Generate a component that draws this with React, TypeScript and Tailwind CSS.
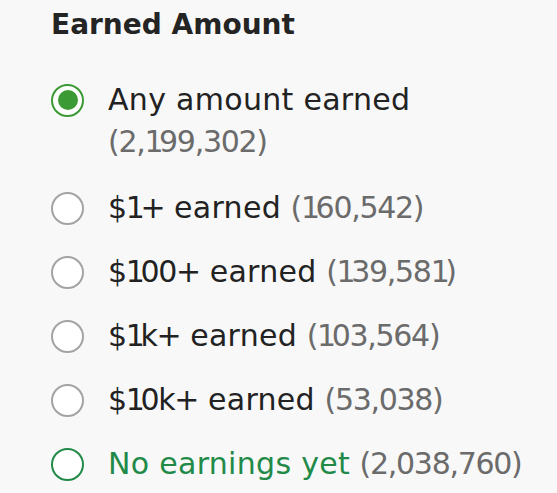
import React from "react";

type Item = { prefix: string; rest: string; count: string; selected?: boolean; green?: boolean; wrap?: boolean };

const items: Item[] = [
  { prefix: "", rest: "Any amount earned", count: "(2,199,302)", selected: true, wrap: true },
  { prefix: "$1+", rest: " earned", count: "(160,542)" },
  { prefix: "$100+", rest: " earned", count: "(139,581)" },
  { prefix: "$1k+", rest: " earned", count: "(103,564)" },
  { prefix: "$10k+", rest: " earned", count: "(53,038)" },
  { prefix: "", rest: "No earnings yet", count: "(2,038,760)", green: true },
];

function Num({ text }: { text: string }) {
  return (
    <>
      {text.split("").map((c, i) =>
        c === "1" ? (
          <span key={i} className="tracking-[-4.5px]">
            {c}
          </span>
        ) : (
          <span key={i} className="tracking-[-1.3px]">
            {c}
          </span>
        )
      )}
    </>
  );
}

function Radio({ selected, green }: { selected?: boolean; green?: boolean }) {
  if (selected) {
    return (
      <div className="w-[33px] h-[33px] rounded-full border-[2.5px] border-[#3c9a34] bg-white flex items-center justify-center shrink-0">
        <div className="w-[20px] h-[20px] rounded-full bg-[#3c9a34]" />
      </div>
    );
  }
  return (
    <div
      className={
        green
          ? "w-[33px] h-[33px] rounded-full border-[2.5px] border-[#228a48] bg-white shrink-0"
          : "w-[33px] h-[33px] rounded-full border-2 border-[#a3a3a3] bg-white shrink-0"
      }
    />
  );
}

export default function App() {
  return (
    <div
      className="w-[557px] h-[493px] bg-[#f8f8f8] pl-[51px] pt-[7px] overflow-hidden"
      style={{ fontFamily: '"DejaVu Sans", sans-serif' }}
    >
      <h2 className="text-[28px] leading-[36px] font-bold text-[#242424]">Earned Amount</h2>
      <div className="mt-[36px] flex flex-col gap-[22px]">
        {items.map((it) => (
          <div key={it.rest + it.prefix} className={it.wrap ? "flex items-start mb-[2px]" : "flex items-start"}>
            <div className="h-[42px] flex items-center">
              <Radio selected={it.selected} green={it.green} />
            </div>
            <div className="ml-[24px] text-[30px] leading-[42px] whitespace-nowrap">
              <span className={it.green ? "text-[#228a48]" : "text-[#222222]"}>
                {it.prefix ? <Num text={it.prefix} /> : null}
                <span className="tracking-[0.3px]">{it.rest}</span>
              </span>
              {it.wrap ? <br /> : " "}
              <span className="text-[#6b6b6b]">
                <Num text={it.count} />
              </span>
            </div>
          </div>
        ))}
      </div>
    </div>
  );
}
